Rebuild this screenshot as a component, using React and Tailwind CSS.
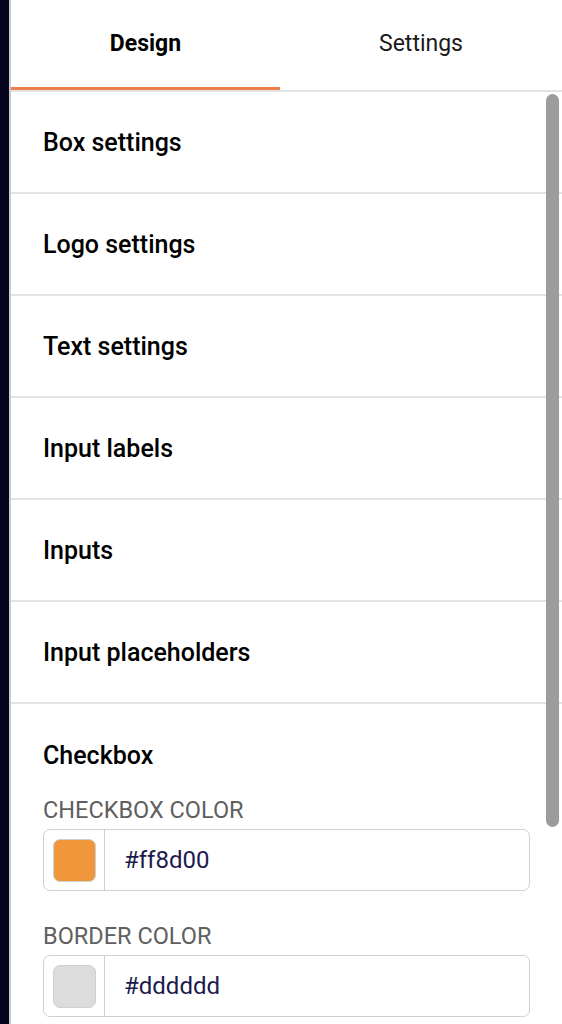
import React, { useState } from 'react';

const sections = [
  'Box settings',
  'Logo settings',
  'Text settings',
  'Input labels',
  'Inputs',
  'Input placeholders',
];

function ColorField({ label, value, swatch }) {
  return (
    <div>
      <div className="h-[28px] text-[23.5px] leading-[28px] text-[#5f5f5f] uppercase">{label}</div>
      <div className="mt-[5px] flex h-[62px] w-[487px] rounded-[7px] border border-[#d0d0d0] bg-white">
        <div className="flex w-[61px] items-center justify-center border-r border-[#d0d0d0]">
          <div
            className="h-[43px] w-[43px] rounded-[7px] border border-[#cfcfcf]"
            style={{ backgroundColor: swatch }}
          />
        </div>
        <div className="flex items-center pl-[19px] text-[24px] text-[#1c1b4d]">{value}</div>
      </div>
    </div>
  );
}

export default function App() {
  const [tab, setTab] = useState('design');

  return (
    <div className="flex h-[1024px] w-[562px] overflow-hidden bg-white font-['Roboto',sans-serif]">
      {/* dark edge */}
      <div className="w-[9px] shrink-0 bg-[#05061e]" />
      <div className="w-[2px] shrink-0 bg-[#c9c9cc]" />

      <div className="relative flex min-w-0 flex-1 flex-col">
        {/* Tabs */}
        <div className="flex h-[90px] shrink-0">
          <button
            onClick={() => setTab('design')}
            className={`flex w-[269px] flex-col ${tab === 'design' ? 'text-black font-bold' : 'text-[#1a1a1a]'}`}
          >
            <span className="flex flex-1 items-center justify-center pt-[2px] text-[23px]">Design</span>
            <span className={`h-[3px] w-full ${tab === 'design' ? 'bg-[#eb8148]' : 'bg-transparent'}`} />
          </button>
          <button
            onClick={() => setTab('settings')}
            className={`flex flex-1 flex-col ${tab === 'settings' ? 'text-black font-bold' : 'text-[#1a1a1a]'}`}
          >
            <span className="flex flex-1 items-center justify-center pt-[2px] text-[23px]">Settings</span>
            <span className={`h-[3px] w-full ${tab === 'settings' ? 'bg-[#eb8148]' : 'bg-transparent'}`} />
          </button>
        </div>
        <div className="h-[2px] shrink-0 bg-[#e3e3e3]" />

        {/* Section list */}
        <div className="flex flex-col">
          {sections.map((s) => (
            <div key={s} className="flex h-[102px] items-center border-b-2 border-[#e3e3e3] pt-[2px] pl-[32px]">
              <span className="text-[25px] font-medium text-black">{s}</span>
            </div>
          ))}

          <div className="pl-[32px]">
            <div className="pt-[37px] text-[25px] leading-[30px] font-medium text-black">Checkbox</div>
            <div className="mt-[25px]">
              <ColorField label="Checkbox color" value="#ff8d00" swatch="#f1973b" />
            </div>
            <div className="mt-[31px]">
              <ColorField label="Border color" value="#dddddd" swatch="#dcdcdc" />
            </div>
          </div>
        </div>

        {/* scrollbar thumb */}
        <div className="absolute left-[535px] top-[94px] h-[733px] w-[13px] rounded-full bg-[#9c9c9c]" />
      </div>
    </div>
  );
}
